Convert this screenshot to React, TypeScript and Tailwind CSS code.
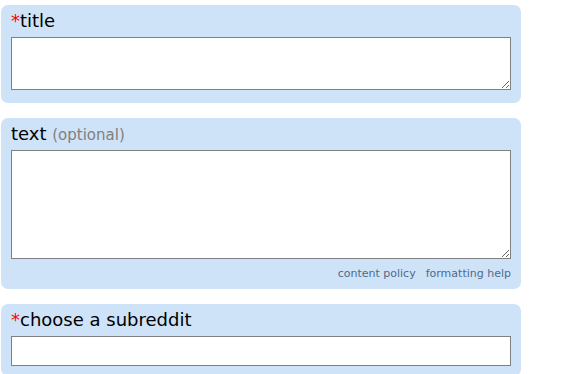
export default function App() {
  const font = { fontFamily: '"DejaVu Sans", Verdana, sans-serif' };
  return (
    <div className="bg-white min-h-screen pt-[5px] pl-[1px]" style={font}>
      <div className="w-[520px] flex flex-col gap-[15px]">
        {/* title */}
        <div className="bg-[#cee3f8] rounded-[7px] px-[10px] pt-[5px] pb-[13px]">
          <div className="text-[18px] leading-[21px] text-black mb-[6px]">
            <span className="text-[#ff0000]">*</span>title
          </div>
          <textarea className="block w-full h-[53px] border border-[#808080] bg-white outline-none" />
        </div>

        {/* text */}
        <div className="bg-[#cee3f8] rounded-[7px] px-[10px] pt-[5px] pb-[9px]">
          <div className="text-[18px] leading-[21px] text-black mb-[6px]">
            text <span className="text-[15px] leading-none text-[#808080]">(optional)</span>
          </div>
          <textarea className="block w-full h-[109px] border border-[#808080] bg-white outline-none" />
          <div className="flex justify-end gap-[10px] mt-[8px] text-[11px] leading-[13px] text-[#4f6a8c]">
            <span>content policy</span>
            <span>formatting help</span>
          </div>
        </div>

        {/* subreddit */}
        <div className="bg-[#cee3f8] rounded-[7px] px-[10px] pt-[5px] pb-[10px]">
          <div className="text-[18px] leading-[21px] text-black mb-[6px]">
            <span className="text-[#ff0000]">*</span>choose a subreddit
          </div>
          <input className="block w-full h-[30px] border border-[#808080] bg-white outline-none" />
        </div>
      </div>
    </div>
  );
}
